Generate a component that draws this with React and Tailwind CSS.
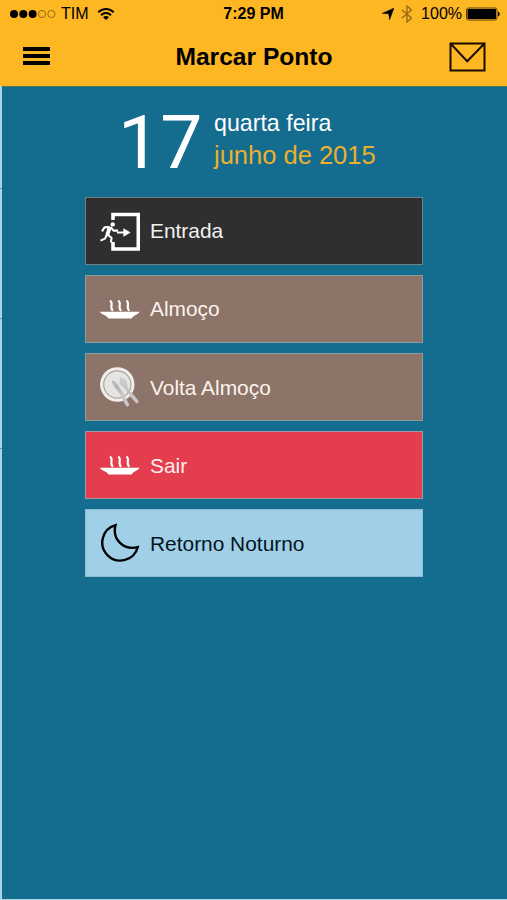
const ExitIcon = () => (
  <svg width="40" height="40" viewBox="0 0 40 40" fill="none">
    <path d="M13 9V3.5H38.3V38H13V31" stroke="#fff" strokeWidth="3.6" />
    <circle cx="12.7" cy="13.4" r="2.2" fill="#fff" />
    <path d="M9.8 16L4.5 16.4L2 20.4M9.8 16L7 23.2L11.5 26.8L11 31.6M7 23.2L5 27.6L0.5 29.6M10.5 16L13.5 19.6H18" stroke="#fff" strokeWidth="2.1" strokeLinejoin="round" />
    <path d="M9.9 15.8L7.4 23.6" stroke="#fff" strokeWidth="3.8" />
    <path d="M17 21.5H25" stroke="#fff" strokeWidth="2" />
    <path d="M23.4 17.3L30.6 21.5L23.4 25.7Z" fill="#fff" />
  </svg>
)

const SoupIcon = () => (
  <svg width="40" height="40" viewBox="0 0 40 40" fill="none">
    <g stroke="#fff" strokeWidth="2.1">
      <path d="M10 11.5C14.4 15 8.6 17 12.9 21.8" />
      <path d="M18.2 11.5C22.6 15 16.8 17 21.1 21.8" />
      <path d="M26.4 11.5C30.8 15 25 17 29.3 21.8" />
    </g>
    <path d="M0 22.8H39.5C39 24.7 36.5 25.4 33.5 27.2L31.5 29.6H8.5L6.5 27.2C3 25.4 0.5 24.7 0 22.8Z" fill="#fff" />
  </svg>
)

const PlateIcon = () => (
  <svg width="40" height="40" viewBox="0 0 40 40" fill="none">
    <circle cx="17.3" cy="17.5" r="17.2" fill="#f1efeb" />
    <circle cx="17.3" cy="17.5" r="13.6" fill="#e5e5e3" stroke="#aaa5a0" strokeWidth="1.2" />
    <path d="M12 13.5C15 13.5 18 17 22 25L19.8 26.5C15 20.5 11.5 17 12 13.5Z" fill="#b8b7b5" />
    <path d="M21.5 26.5L27.3 37.7" stroke="#c9c4c6" strokeWidth="3.6" strokeLinecap="round" />
    <path d="M20 10L26 13L28 20L25 22L19.5 17Z" fill="#c9c9c7" />
    <path d="M25.5 20.5L31 28" stroke="#c4c0c0" strokeWidth="2.4" />
    <path d="M30.5 27L36.8 34.4" stroke="#c9c4c6" strokeWidth="3.6" strokeLinecap="round" />
  </svg>
)

const MoonIcon = () => (
  <svg width="40" height="40" viewBox="0 0 40 40" fill="none">
    <path d="M15.5 2.2A18 18 0 1 0 37.7 24.2C23 27.5 12 16 15.5 2.2Z" stroke="#000" strokeWidth="2.4" />
  </svg>
)

const actions = [
  { label: 'Entrada', icon: ExitIcon, style: 'bg-[#302f30] border-[#6f8185] text-[#f1f1f1]' },
  { label: 'Almoço', icon: SoupIcon, style: 'bg-[#8c7468] border-[#8c9d9f] text-[#fcf3ee]' },
  { label: 'Volta Almoço', icon: PlateIcon, style: 'bg-[#8c7468] border-[#8c9d9f] text-[#fcf3ee]' },
  { label: 'Sair', icon: SoupIcon, style: 'bg-[#e43d4d] border-[#a398a8] text-[#ffeef0]' },
  { label: 'Retorno Noturno', icon: MoonIcon, style: 'bg-[#a0d0e8] border-[#8cbcd0] text-[#07131c]' }
]

const StatusBar = () => (
  <div className="grid grid-cols-3 items-center h-7 px-[9px] text-[16px] leading-7">
    <div className="flex items-center">
      <svg width="48" height="12" viewBox="0 0 48 12">
        <g fill="#000">
          <circle cx="5" cy="6" r="4" />
          <circle cx="14.3" cy="6" r="4" />
          <circle cx="23.6" cy="6" r="4" />
        </g>
        <g fill="none" stroke="#956b16" strokeWidth="1">
          <circle cx="33" cy="6" r="3.6" />
          <circle cx="42.4" cy="6" r="3.6" />
        </g>
      </svg>
      <span className="ml-[4px]">TIM</span>
      <svg className="ml-[8px]" width="18" height="14" viewBox="0 0 18 14" fill="none" stroke="#000" strokeWidth="2">
        <path d="M1.3 5.2C5.5 0.9 12.5 0.9 16.7 5.2M4 8.2C6.8 5.4 11.2 5.4 14 8.2" />
        <path d="M9 13L6 10.2C7.7 8.7 10.3 8.7 12 10.2Z" fill="#000" stroke="none" />
      </svg>
    </div>
    <span className="text-center font-bold">7:29 PM</span>
    <div className="flex items-center justify-end">
      <svg width="12" height="12" viewBox="0 0 12 12">
        <path d="M12 0L7.6 12L6.6 5.8L0 5.4Z" fill="#000" stroke="#000" strokeWidth="0.4" />
      </svg>
      <svg className="ml-[7px]" width="12" height="18" viewBox="0 0 12 18" fill="none" stroke="#956b16" strokeWidth="1.4">
        <path d="M1 5L10.5 13L6 17V1L10.5 5L1 13" />
      </svg>
      <span className="ml-[8px]">100%</span>
      <svg className="ml-[4px] -mr-[3px]" width="35" height="14" viewBox="0 0 35 14">
        <rect x="0.5" y="1" width="30.5" height="12" rx="2" fill="none" stroke="#5b4212" />
        <rect x="1.5" y="2" width="28.5" height="10" rx="1" fill="#000" />
        <path d="M32 4.7C34.3 5 34.3 9 32 9.3Z" fill="#000" />
      </svg>
    </div>
  </div>
)

const App = () => {
  return (
    <div className="flex flex-col w-[507px] h-[900px] overflow-hidden bg-[#a7d6e8] text-black font-['Liberation_Sans',Arial,sans-serif]">
      <header className="h-[86px] shrink-0 bg-[#fdb723]">
        <StatusBar />
        <div className="flex items-center justify-between h-[58px] pl-[23px] pr-[21px]">
          <button className="flex flex-col gap-[3px] w-[36px] pb-[2px]" aria-label="Menu">
            <span className="w-[27px] h-1 bg-black" />
            <span className="w-[27px] h-1 bg-black" />
            <span className="w-[27px] h-1 bg-black" />
          </button>
          <h1 className="text-[24.6px] leading-[58px] font-bold">Marcar Ponto</h1>
          <button aria-label="Mensagens">
            <svg width="37" height="30" viewBox="0 0 37 30" fill="none" stroke="#1a0c00" strokeWidth="2">
              <path d="M1.5 1.5H35.5V28.5H1.5ZM1.5 1.5L18.2 19.3L35.5 1.5" />
            </svg>
          </button>
        </div>
      </header>

      <div className="flex h-[813px]">
        <div className="w-[2px] shrink-0 pt-[102px] flex flex-col gap-[129px]">
          <span className="h-px bg-[#5799b0]" />
          <span className="h-px bg-[#5799b0]" />
          <span className="h-px bg-[#5799b0]" />
        </div>
        <main className="grow bg-[#146c8f] border-t border-[#4c7860] pl-[83px]">
          <div className="flex h-[110px] pl-[33px] text-white">
            <span className="w-[96px] pt-[18px] font-[Roboto,sans-serif] text-[75px] leading-[74px]">17</span>
            <div className="flex flex-col pt-[20px]">
              <span className="text-[23.2px] leading-[32px]">quarta feira</span>
              <span className="text-[25.5px] leading-[32px] text-[#ebb02c]">junho de 2015</span>
            </div>
          </div>
          <div className="flex flex-col gap-[10.1px] w-[338px]">
            {actions.map(({ label, icon: Icon, style }) => (
              <button key={label} className={`flex items-center gap-[10px] h-[68px] pl-[14px] border text-[20.9px] text-left ${style}`}>
                <Icon />
                <span>{label}</span>
              </button>
            ))}
          </div>
        </main>
      </div>
    </div>
  )
}

export default App
